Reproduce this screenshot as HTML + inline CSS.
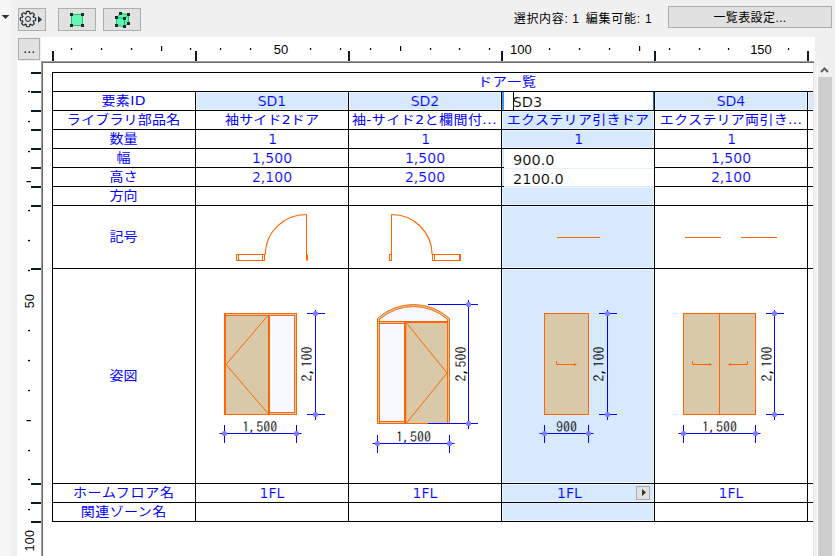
<!DOCTYPE html>
<html lang="ja">
<head>
<meta charset="utf-8">
<title>ドア一覧</title>
<style>
html,body{margin:0;padding:0;}
body{width:835px;height:556px;overflow:hidden;background:#f0f0f0;position:relative;
 font-family:"Liberation Sans","Noto Sans CJK JP",sans-serif;}
.abs,.abs *{position:absolute;}
div{position:absolute;box-sizing:border-box;}
svg{position:absolute;left:0;top:0;overflow:visible;}
.btn{background:#e1e1e1;border:1px solid #adadad;}
.hl{background:#000;height:1px;}
.vl{background:#000;width:1px;}
.t{color:#0000ff;font-size:14px;line-height:18px;height:18px;text-align:center;white-space:nowrap;
 font-family:"DejaVu Sans","Noto Sans CJK JP",sans-serif;}
.t.j{font-family:"DejaVu Sans","Noto Sans CJK JP",sans-serif;transform:translateY(-0.2px) scaleY(0.91);transform-origin:50% 50%;}
.n{font-size:14px;-webkit-text-stroke:0.16px #fff;}
.n.b{-webkit-text-stroke-color:#d7e9fd;}
.e{color:#000;text-align:left;font-size:14.5px;-webkit-text-stroke:0.16px #fff;}
.ui{font-size:12px;line-height:16px;color:#000;white-space:nowrap;font-family:"Liberation Sans","Noto Sans CJK JP",sans-serif;}
.dimt{font-family:"IPAGothic","Liberation Mono",monospace;font-size:14px;fill:#000;stroke:#fff;stroke-width:0.12px;}
.dimt.b{stroke:#d7e9fd;}
.rl{font-family:"Liberation Sans",sans-serif;font-size:13px;fill:#000;}
</style>
</head>
<body>

<div style="left:0;top:0;width:11px;height:556px;background:#f7f7f7"></div>
<div class="btn" style="left:18px;top:8px;width:28px;height:23px"></div>
<div class="btn" style="left:58px;top:8px;width:38px;height:23px"></div>
<div class="btn" style="left:103px;top:8px;width:38px;height:23px"></div>
<div class="btn" style="left:18px;top:38px;width:22px;height:22px"></div>
<div class="ui" style="left:513.8px;top:11px;letter-spacing:0.65px">選択内容: 1</div>
<div class="ui" style="left:585.8px;top:11px;letter-spacing:0.75px">編集可能: 1</div>
<div class="btn" style="left:668px;top:6px;width:164px;height:22px"></div>
<div class="ui" style="left:668px;top:10px;width:164px;text-align:center;letter-spacing:0.4px">一覧表設定...</div>
<div style="left:41px;top:37px;width:774px;height:24px;background:#fff"></div>
<div style="left:17px;top:61px;width:24px;height:495px;background:#fff"></div>
<div style="left:41px;top:61px;width:773px;height:495px;background:#fff"></div>
<div style="left:813px;top:63px;width:1px;height:493px;background:#e6e6e6"></div>
<div style="left:41px;top:61px;width:773px;height:1px;background:#a0a0a0"></div>
<div style="left:41px;top:62px;width:773px;height:1px;background:#696969"></div>
<div style="left:41px;top:61px;width:1px;height:495px;background:#a0a0a0"></div>
<div style="left:42px;top:62px;width:1px;height:494px;background:#696969"></div>
<div style="left:817px;top:61px;width:1px;height:495px;background:#fff"></div>
<div style="left:818px;top:77px;width:14px;height:479px;background:#cdcdcd"></div>
<div id="doc" style="left:0;top:0;width:813px;height:556px;overflow:hidden">
<div style="left:196px;top:92px;width:152px;height:18px;background:#d7e9fd;border:1px solid #eaf4ff"></div>
<div style="left:349px;top:92px;width:152px;height:18px;background:#d7e9fd;border:1px solid #eaf4ff"></div>
<div style="left:655px;top:92px;width:152px;height:18px;background:#d7e9fd;border:1px solid #eaf4ff"></div>
<div style="left:808px;top:92px;width:153px;height:18px;background:#d7e9fd;border:1px solid #eaf4ff"></div>
<div style="left:502px;top:111px;width:152px;height:18px;background:#d7e9fd;border:1px solid #eaf4ff"></div>
<div style="left:502px;top:130px;width:152px;height:18px;background:#d7e9fd;border:1px solid #eaf4ff"></div>
<div style="left:502px;top:149px;width:152px;height:37px;background:#d7e9fd"></div>
<div style="left:502px;top:187px;width:152px;height:18px;background:#d7e9fd;border:1px solid #eaf4ff"></div>
<div style="left:502px;top:206px;width:152px;height:62px;background:#d7e9fd;border:1px solid #eaf4ff"></div>
<div style="left:502px;top:269px;width:152px;height:214px;background:#d7e9fd;border:1px solid #eaf4ff"></div>
<div style="left:502px;top:484px;width:152px;height:18px;background:#d7e9fd;border:1px solid #eaf4ff"></div>
<div style="left:502px;top:503px;width:152px;height:18px;background:#d7e9fd;border:1px solid #eaf4ff"></div>
<div class="hl" style="left:52px;top:72px;width:910px"></div>
<div class="hl" style="left:52px;top:91px;width:910px"></div>
<div class="hl" style="left:52px;top:110px;width:910px"></div>
<div class="hl" style="left:52px;top:129px;width:910px"></div>
<div class="hl" style="left:52px;top:148px;width:910px"></div>
<div class="hl" style="left:52px;top:167px;width:910px"></div>
<div class="hl" style="left:52px;top:186px;width:910px"></div>
<div class="hl" style="left:52px;top:205px;width:910px"></div>
<div class="hl" style="left:52px;top:268px;width:910px"></div>
<div class="hl" style="left:52px;top:483px;width:910px"></div>
<div class="hl" style="left:52px;top:502px;width:910px"></div>
<div class="hl" style="left:52px;top:521px;width:910px"></div>
<div class="vl" style="left:52px;top:72px;height:450px"></div>
<div class="vl" style="left:195px;top:91px;height:431px"></div>
<div class="vl" style="left:348px;top:91px;height:431px"></div>
<div class="vl" style="left:501px;top:91px;height:431px"></div>
<div class="vl" style="left:654px;top:91px;height:431px"></div>
<div class="vl" style="left:807px;top:91px;height:431px"></div>
<div style="left:502px;top:92px;width:152px;height:18px;background:#fff"></div>
<div style="left:502px;top:92px;width:2px;height:18px;background:#3399ff"></div>
<div style="left:653px;top:92px;width:1px;height:18px;background:#0078d7"></div>
<div style="left:513px;top:92px;width:1px;height:18px;background:#000"></div>
<div class="t e" style="left:512.6px;top:93px">SD3</div>
<div style="left:504px;top:149px;width:150px;height:37px;background:#fff"></div>
<div style="left:504px;top:168px;width:150px;height:1px;background:#e3f0ff"></div>
<div class="hl" style="left:502px;top:167px;width:2px"></div>
<div class="hl" style="left:502px;top:186px;width:152px;background:#d7e9fd"></div>
<div class="hl" style="left:502px;top:186px;width:2px"></div>
<div class="t e" style="left:513px;top:151px">900.0</div>
<div class="t e" style="left:513px;top:170px">2100.0</div>
<div class="t j" style="left:432.3px;top:73px;width:150px;letter-spacing:0.6px">ドア一覧</div>
<div class="t j" style="left:48.7px;top:92px;width:150px;letter-spacing:0.4px">要素ID</div>
<div class="t j" style="left:48.6px;top:111px;width:150px;letter-spacing:0.2px">ライブラリ部品名</div>
<div class="t j" style="left:48.5px;top:130px;width:150px;letter-spacing:0px">数量</div>
<div class="t j" style="left:48.5px;top:149px;width:150px;letter-spacing:0px">幅</div>
<div class="t j" style="left:48.5px;top:168px;width:150px;letter-spacing:0px">高さ</div>
<div class="t j" style="left:48.5px;top:187px;width:150px;letter-spacing:0px">方向</div>
<div class="t j" style="left:48.5px;top:228px;width:150px;letter-spacing:0px">記号</div>
<div class="t j" style="left:48.5px;top:367px;width:150px;letter-spacing:0px">姿図</div>
<div class="t j" style="left:48.875px;top:484px;width:150px;letter-spacing:0.75px">ホームフロア名</div>
<div class="t j" style="left:48.7px;top:503px;width:150px;letter-spacing:0.4px">関連ゾーン名</div>
<div class="t n b" style="left:197px;top:92px;width:150px;">SD1</div>
<div class="t n b" style="left:350px;top:92px;width:150px;">SD2</div>
<div class="t n b" style="left:656px;top:92px;width:150px;">SD4</div>
<div class="t j" style="left:197.1px;top:111px;width:150px;letter-spacing:0.2px">袖サイド2ドア</div>
<div class="t j" style="left:349.5px;top:111px;width:150px;letter-spacing:0.45px">袖-サイド2と欄間付...</div>
<div class="t j" style="left:503.1px;top:111px;width:150px;letter-spacing:0.3px">エクステリア引きドア</div>
<div class="t j" style="left:656px;top:111px;width:150px;letter-spacing:0.3px">エクステリア両引き...</div>
<div class="t n" style="left:197.6px;top:130px;width:150px;">1</div>
<div class="t n" style="left:350.6px;top:130px;width:150px;">1</div>
<div class="t n b" style="left:503.6px;top:130px;width:150px;">1</div>
<div class="t n" style="left:656.6px;top:130px;width:150px;">1</div>
<div class="t n" style="left:197px;top:149px;width:150px;">1,500</div>
<div class="t n" style="left:350px;top:149px;width:150px;">1,500</div>
<div class="t n" style="left:656px;top:149px;width:150px;">1,500</div>
<div class="t n" style="left:197px;top:168px;width:150px;">2,100</div>
<div class="t n" style="left:350px;top:168px;width:150px;">2,500</div>
<div class="t n" style="left:656px;top:168px;width:150px;">2,100</div>
<div class="t n" style="left:197px;top:484px;width:150px;">1FL</div>
<div class="t n" style="left:350px;top:484px;width:150px;">1FL</div>
<div class="t n b" style="left:494.5px;top:484px;width:150px;">1FL</div>
<div class="t n" style="left:656px;top:484px;width:150px;">1FL</div>
<div class="btn" style="left:636px;top:486px;width:14px;height:14px"></div>
<svg width="835" height="556" viewBox="0 0 835 556">
<g fill="none" stroke="#ff6600" stroke-width="1">
<rect x="236.5" y="254.5" width="28" height="6"/>
<path d="M238.5 254.5V260.5M262.5 254.5V260.5"/>
<path d="M306.5 214.5V260.5M307.5 254.5V260.5"/>
<path d="M265.3 254.5A41 40 0 0 1 306.5 214.5" stroke-width="1.15"/>
<rect x="389.5" y="254.5" width="2" height="6"/>
<path d="M391.5 214.5V260.5"/>
<path d="M391.5 214.5A40.6 40 0 0 1 432.1 254.5" stroke-width="1.15"/>
<rect x="432.5" y="254.5" width="28" height="6"/>
<path d="M434.5 254.5V260.5M459.5 254.5V260.5"/>
<path d="M557 237.5H600M685 237.5H721M741 237.5H777"/>
</g>
<rect x="224.5" y="313.5" width="72" height="101" fill="#d9c9a9" stroke="#ff6600"/>
<rect x="269.5" y="315.5" width="25" height="97" fill="#f8f8ff" stroke="#ff6600"/>
<path d="M225.5 314V414M226 315.5H294" stroke="#ff6600" fill="none"/>
<rect x="268" y="315" width="2" height="99.5" fill="#ff6600"/>
<path d="M268 315.5L226 364.5L268 413.5" stroke="#ff6600" fill="none"/>
<path d="M219.5 433.5H301.5M224.5 425V443M296.5 425V443" stroke="#0000ff" fill="none"/>
<circle cx="224.5" cy="433.5" r="2.6" fill="#8080ff"/>
<circle cx="296.5" cy="433.5" r="2.6" fill="#8080ff"/>
<text class="dimt" x="259.8" y="431.5" text-anchor="middle">1,500</text>
<path d="M315.5 310V420M307 313.5H325M307 414.5H325" stroke="#0000ff" fill="none"/>
<circle cx="315.5" cy="313.5" r="2.6" fill="#8080ff"/>
<circle cx="315.5" cy="414.5" r="2.6" fill="#8080ff"/>
<text class="dimt" transform="translate(311.5 364.0) rotate(-90)" text-anchor="middle">2,100</text>
<path d="M377.5 423.5V318.5A53.29 53.29 0 0 1 449.5 318.5V423.5Z" fill="#d9c9a9" stroke="#ff6600"/>
<path d="M379.5 321.5V319.4A51.29 51.29 0 0 1 447.5 319.4V321.5Z" fill="#f8f8ff" stroke="#ff6600"/>
<rect x="379.5" y="323.5" width="25" height="98" fill="#f8f8ff" stroke="#ff6600"/>
<path d="M379.5 319.5V423M447.5 319.5V423" stroke="#ff6600" fill="none"/>
<rect x="404.3" y="321" width="43.7" height="2" fill="#ff6600"/>
<rect x="404.3" y="321" width="2" height="102.5" fill="#ff6600"/>
<path d="M406.5 323L447 373L406.5 423" stroke="#ff6600" fill="none"/>
<path d="M372.5 443.5H454.5M377.5 435V453M449.5 435V453" stroke="#0000ff" fill="none"/>
<circle cx="377.5" cy="443.5" r="2.6" fill="#8080ff"/>
<circle cx="449.5" cy="443.5" r="2.6" fill="#8080ff"/>
<text class="dimt" x="413.5" y="441.5" text-anchor="middle">1,500</text>
<path d="M468.5 300V429M428 304.5H478M428 423.5H478" stroke="#0000ff" fill="none"/>
<circle cx="468.5" cy="304.5" r="2.6" fill="#8080ff"/>
<circle cx="468.5" cy="423.5" r="2.6" fill="#8080ff"/>
<text class="dimt" transform="translate(465.5 364.0) rotate(-90)" text-anchor="middle">2,500</text>
<rect x="544.5" y="313.5" width="44" height="101" fill="#d9c9a9" stroke="#ff6600"/>
<path d="M556.5 361V364.5H575" stroke="#ff6600" fill="none"/><path d="M577 364.5L574 363V366Z" fill="#ff6600"/>
<path d="M539.5 433.5H593.5M544.5 425V443M588.5 425V443" stroke="#0000ff" fill="none"/>
<circle cx="544.5" cy="433.5" r="2.6" fill="#8080ff"/>
<circle cx="588.5" cy="433.5" r="2.6" fill="#8080ff"/>
<text class="dimt b" x="566.5" y="431.5" text-anchor="middle">900</text>
<path d="M607.5 310V420M599 313.5H617M599 414.5H617" stroke="#0000ff" fill="none"/>
<circle cx="607.5" cy="313.5" r="2.6" fill="#8080ff"/>
<circle cx="607.5" cy="414.5" r="2.6" fill="#8080ff"/>
<text class="dimt b" transform="translate(604 364.0) rotate(-90)" text-anchor="middle">2,100</text>
<rect x="683.5" y="313.5" width="72" height="101" fill="#d9c9a9" stroke="#ff6600"/>
<path d="M719.5 313.5V414.5" stroke="#ff6600" fill="none"/>
<path d="M692.5 361V364.5H710" stroke="#ff6600" fill="none"/><path d="M712 364.5L709 363V366Z" fill="#ff6600"/>
<path d="M747.5 361V364.5H730" stroke="#ff6600" fill="none"/><path d="M728 364.5L731 363V366Z" fill="#ff6600"/>
<path d="M678.5 433.5H760.5M683.5 425V443M755.5 425V443" stroke="#0000ff" fill="none"/>
<circle cx="683.5" cy="433.5" r="2.6" fill="#8080ff"/>
<circle cx="755.5" cy="433.5" r="2.6" fill="#8080ff"/>
<text class="dimt" x="719.5" y="431.5" text-anchor="middle">1,500</text>
<path d="M774.5 310V420M766 313.5H784M766 414.5H784" stroke="#0000ff" fill="none"/>
<circle cx="774.5" cy="313.5" r="2.6" fill="#8080ff"/>
<circle cx="774.5" cy="414.5" r="2.6" fill="#8080ff"/>
<text class="dimt" transform="translate(771.5 364.0) rotate(-90)" text-anchor="middle">2,100</text>
<path d="M642 489L646 492.5L642 496Z" fill="#333"/>
</svg>
</div>
<svg width="835" height="556" viewBox="0 0 835 556">
<rect x="70.9" y="48" width="1.3" height="2" fill="#000"/>
<rect x="100.9" y="48" width="1.3" height="2" fill="#000"/>
<rect x="130.9" y="48" width="1.3" height="2" fill="#000"/>
<rect x="161" y="46" width="1.2" height="5" fill="#000"/>
<rect x="189.9" y="48" width="1.3" height="2" fill="#000"/>
<rect x="219.9" y="48" width="1.3" height="2" fill="#000"/>
<rect x="249.9" y="48" width="1.3" height="2" fill="#000"/>
<text class="rl" x="281.0" y="54" text-anchor="middle">50</text>
<rect x="309.9" y="48" width="1.3" height="2" fill="#000"/>
<rect x="339.9" y="48" width="1.3" height="2" fill="#000"/>
<rect x="369.9" y="48" width="1.3" height="2" fill="#000"/>
<rect x="400" y="46" width="1.2" height="5" fill="#000"/>
<rect x="429.9" y="48" width="1.3" height="2" fill="#000"/>
<rect x="458.9" y="48" width="1.3" height="2" fill="#000"/>
<rect x="488.9" y="48" width="1.3" height="2" fill="#000"/>
<text class="rl" x="520.9" y="54" text-anchor="middle">100</text>
<rect x="548.9" y="48" width="1.3" height="2" fill="#000"/>
<rect x="578.9" y="48" width="1.3" height="2" fill="#000"/>
<rect x="608.9" y="48" width="1.3" height="2" fill="#000"/>
<rect x="639" y="46" width="1.2" height="5" fill="#000"/>
<rect x="668.9" y="48" width="1.3" height="2" fill="#000"/>
<rect x="698.9" y="48" width="1.3" height="2" fill="#000"/>
<rect x="727.9" y="48" width="1.3" height="2" fill="#000"/>
<text class="rl" x="761.0" y="54" text-anchor="middle">150</text>
<rect x="787.9" y="48" width="1.3" height="2" fill="#000"/>
<rect x="52" y="51" width="2" height="10" fill="#0d1b26"/>
<rect x="195" y="51" width="2" height="10" fill="#0d1b26"/>
<rect x="348" y="51" width="2" height="10" fill="#0d1b26"/>
<rect x="501" y="51" width="2" height="10" fill="#0d1b26"/>
<rect x="654" y="51" width="2" height="10" fill="#0d1b26"/>
<rect x="807" y="51" width="2" height="10" fill="#0d1b26"/>
<rect x="28" y="90.9" width="2" height="1.3" fill="#000"/>
<rect x="28" y="120.9" width="2" height="1.3" fill="#000"/>
<rect x="28" y="150.9" width="2" height="1.3" fill="#000"/>
<rect x="26.5" y="181" width="4.5" height="1.2" fill="#000"/>
<rect x="28" y="209.9" width="2" height="1.3" fill="#000"/>
<rect x="28" y="239.9" width="2" height="1.3" fill="#000"/>
<rect x="28" y="269.9" width="2" height="1.3" fill="#000"/>
<text class="rl" style="font-size:12.5px;letter-spacing:0.25px" transform="translate(34 301.0) rotate(-90)" text-anchor="middle">50</text>
<rect x="28" y="329.9" width="2" height="1.3" fill="#000"/>
<rect x="28" y="359.9" width="2" height="1.3" fill="#000"/>
<rect x="28" y="389.9" width="2" height="1.3" fill="#000"/>
<rect x="26.5" y="420" width="4.5" height="1.2" fill="#000"/>
<rect x="28" y="449.9" width="2" height="1.3" fill="#000"/>
<rect x="28" y="478.9" width="2" height="1.3" fill="#000"/>
<rect x="28" y="508.9" width="2" height="1.3" fill="#000"/>
<text class="rl" style="font-size:12.5px;letter-spacing:0.25px" transform="translate(34 540.6) rotate(-90)" text-anchor="middle">100</text>
<rect x="31" y="72" width="10" height="2" fill="#0d1b26"/>
<rect x="31" y="91" width="10" height="2" fill="#0d1b26"/>
<rect x="31" y="110" width="10" height="2" fill="#0d1b26"/>
<rect x="31" y="129" width="10" height="2" fill="#0d1b26"/>
<rect x="31" y="148" width="10" height="2" fill="#0d1b26"/>
<rect x="31" y="167" width="10" height="2" fill="#0d1b26"/>
<rect x="31" y="186" width="10" height="2" fill="#0d1b26"/>
<rect x="31" y="205" width="10" height="2" fill="#0d1b26"/>
<rect x="31" y="268" width="10" height="2" fill="#0d1b26"/>
<rect x="31" y="483" width="10" height="2" fill="#0d1b26"/>
<rect x="31" y="502" width="10" height="2" fill="#0d1b26"/>
<rect x="31" y="521" width="10" height="2" fill="#0d1b26"/>
<path d="M1.5 15H9.5L5.5 19Z" fill="#333"/>
<path d="M26.25 13.50L26.25 12.40Q26.25 11.30 27.35 11.30L28.65 11.30Q29.75 11.30 29.75 12.40L29.75 13.50A5.9 5.9 0 0 1 30.65 13.87L31.43 13.10Q32.21 12.32 32.99 13.10L33.90 14.01Q34.68 14.79 33.90 15.57L33.13 16.35A5.9 5.9 0 0 1 33.50 17.25L34.60 17.25Q35.70 17.25 35.70 18.35L35.70 19.65Q35.70 20.75 34.60 20.75L33.50 20.75A5.9 5.9 0 0 1 33.13 21.65L33.90 22.43Q34.68 23.21 33.90 23.99L32.99 24.90Q32.21 25.68 31.43 24.90L30.65 24.13A5.9 5.9 0 0 1 29.75 24.50L29.75 25.60Q29.75 26.70 28.65 26.70L27.35 26.70Q26.25 26.70 26.25 25.60L26.25 24.50A5.9 5.9 0 0 1 25.35 24.13L24.57 24.90Q23.79 25.68 23.01 24.90L22.10 23.99Q21.32 23.21 22.10 22.43L22.87 21.65A5.9 5.9 0 0 1 22.50 20.75L21.40 20.75Q20.30 20.75 20.30 19.65L20.30 18.35Q20.30 17.25 21.40 17.25L22.50 17.25A5.9 5.9 0 0 1 22.87 16.35L22.10 15.57Q21.32 14.79 22.10 14.01L23.01 13.10Q23.79 12.32 24.57 13.10L25.35 13.87A5.9 5.9 0 0 1 26.25 13.50Z" fill="none" stroke="#14222e" stroke-width="1.15" stroke-linejoin="round"/>
<circle cx="28" cy="19" r="2.5" fill="none" stroke="#1a2a36" stroke-width="1"/>
<path d="M38 16L42 19.5L38 23Z" fill="#333"/>
<rect x="71.5" y="14.5" width="11" height="11" fill="#66f7b8" stroke="#1ec468"/>
<rect x="70" y="13" width="3" height="3" fill="#1c2630"/>
<rect x="81" y="13" width="3" height="3" fill="#1c2630"/>
<rect x="70" y="24" width="3" height="3" fill="#1c2630"/>
<rect x="81" y="24" width="3" height="3" fill="#1c2630"/>
<path d="M116.5 17.5L120.5 13.5L128.5 14.5L128.5 23L124.5 26.5L116.5 25.5Z" fill="#5ff5b0" stroke="#18c060"/>
<path d="M116.5 17.5L124.5 18.5L128.5 14.5M124.5 18.5V26.5" fill="none" stroke="#18c060"/>
<rect x="119" y="12" width="3" height="3" fill="#1c2630"/>
<rect x="127" y="13" width="3" height="3" fill="#1c2630"/>
<rect x="115" y="16" width="3" height="3" fill="#1c2630"/>
<rect x="123" y="17" width="3" height="3" fill="#1c2630"/>
<rect x="115" y="24" width="3" height="3" fill="#1c2630"/>
<rect x="123" y="25" width="3" height="3" fill="#1c2630"/>
<rect x="127" y="22" width="3" height="3" fill="#1c2630"/>
<text x="23.3" y="53" style="font-family:'Liberation Sans',sans-serif;font-size:14.4px;fill:#222">...</text>
<path d="M821 72L824.5 68.5L828 72" fill="none" stroke="#606060" stroke-width="2"/>
</svg>
</body>
</html>
